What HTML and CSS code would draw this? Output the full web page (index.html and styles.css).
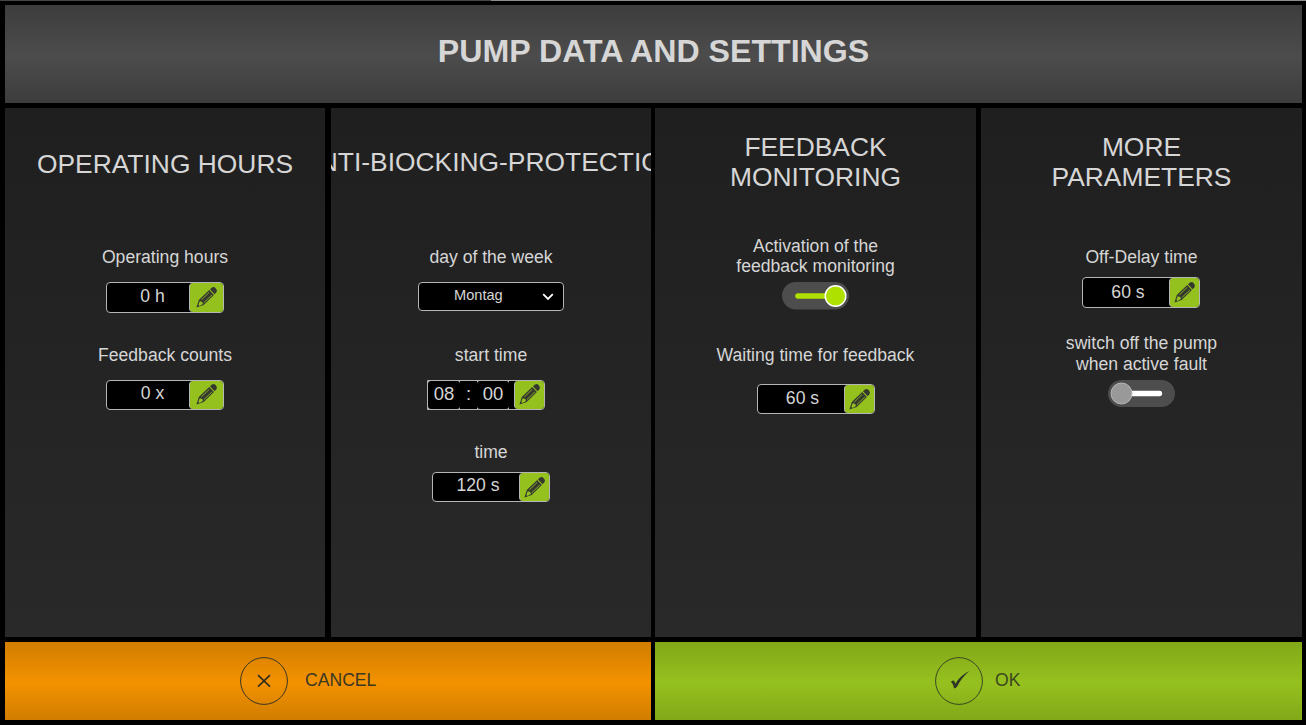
FILE: index.html
```html
<!DOCTYPE html>
<html lang="en">
<head>
<meta charset="utf-8">
<title>Pump data and settings</title>
<link rel="stylesheet" href="styles.css">
</head>
<body>
<svg class="defs" width="0" height="0">
  <symbol id="pencil" viewBox="0 0 24 24">
    <path d="M1.5 22.5 4 14.6 14.8 4.3 19.7 9.5 9 19.8Z" fill="#34382f"/>
    <path d="M15.6 3.4 17.7 1.6Q19.5.4 21.2 1.9L22.2 3Q23.6 4.8 22.3 6.6L20.5 8.6Z" fill="#34382f"/>
    <path d="M4.9 15.8 3.5 19.8 4.8 20.8 8.2 18.9 7.7 16.7Z" fill="#95c11f"/>
    <path d="M6.6 14.6 14.8 6.6M9.2 17.4 17.8 9.2" fill="none" stroke="#95c11f" stroke-width=".9"/>
  </symbol>
</svg>
<div class="screen">
  <header class="header"><h1 class="title">PUMP DATA AND SETTINGS</h1></header>
  <main class="panels">
    <section class="panel">
      <h2 class="heading heading-low">OPERATING HOURS</h2>
      <div class="label">Operating hours</div>
      <div class="input input-tall input-hours"><span class="value value-hours">0 h</span><button class="edit edit-wide"><svg class="pencil"><use href="#pencil"/></svg></button></div>
      <div class="label label-second">Feedback counts</div>
      <div class="input input-counts"><span class="value value-counts">0 x</span><button class="edit edit-wide"><svg class="pencil"><use href="#pencil"/></svg></button></div>
    </section>
    <section class="panel panel-protection">
      <h2 class="heading heading-clip">ANTI-BIOCKING-PROTECTION</h2>
      <div class="label">day of the week</div>
      <div class="select"><span class="choice">Montag</span><svg class="chevron" viewBox="0 0 12 8"><path d="M1.2 1.2 6 6 10.8 1.2" fill="none" stroke="#fff" stroke-width="1.8"/></svg></div>
      <div class="label label-start">start time</div>
      <div class="input input-clock">
        <div class="clock"><span class="digits">08</span><span class="colon">:</span><span class="digits">00</span><span class="rest"></span></div>
        <button class="edit"><svg class="pencil"><use href="#pencil"/></svg></button>
      </div>
      <div class="label label-time">time</div>
      <div class="input input-time"><span class="value">120 s</span><button class="edit"><svg class="pencil"><use href="#pencil"/></svg></button></div>
    </section>
    <section class="panel">
      <h2 class="heading">FEEDBACK<br>MONITORING</h2>
      <div class="label label-activation">Activation of the<br>feedback monitoring</div>
      <svg class="toggle" viewBox="0 0 67 28"><rect width="67" height="27.5" rx="13.75" fill="#4d4d4d"/><path d="M16 14H46" stroke="#aee000" stroke-width="5.6" stroke-linecap="round"/><circle cx="53.5" cy="14" r="10.3" fill="#aee000" stroke="#fff" stroke-width="1.5"/></svg>
      <div class="label label-waiting">Waiting time for feedback</div>
      <div class="input input-waiting"><span class="value value-waiting">60 s</span><button class="edit"><svg class="pencil"><use href="#pencil"/></svg></button></div>
    </section>
    <section class="panel">
      <h2 class="heading">MORE<br>PARAMETERS</h2>
      <div class="label">Off-Delay time</div>
      <div class="input input-tall input-delay"><span class="value value-delay">60 s</span><button class="edit"><svg class="pencil"><use href="#pencil"/></svg></button></div>
      <div class="label label-fault">switch off the pump<br>when active fault</div>
      <svg class="toggle toggle-off" viewBox="0 0 67 28"><rect width="67" height="27" rx="13.5" fill="#4d4d4d"/><path d="M20 13.5H51.5" stroke="#fff" stroke-width="5.3" stroke-linecap="round"/><circle cx="13.5" cy="13.5" r="10.5" fill="#999" stroke="#b8b8b8" stroke-width="1"/></svg>
    </section>
  </main>
  <footer class="actions">
    <button class="action cancel"><svg class="badge" viewBox="0 0 48 48"><circle cx="24" cy="24" r="23.4" fill="none" stroke="#3a3523" stroke-width="1"/><path d="M18 18.2 30 29.7M30 18.2 18 29.7" stroke="#302d20" stroke-width="1.6"/></svg><span class="caption">CANCEL</span></button>
    <button class="action ok"><svg class="badge" viewBox="0 0 48 48"><circle cx="24" cy="24" r="23.4" fill="none" stroke="#3a4523" stroke-width="1"/><path d="M15.8 25Q17.5 22.6 18.9 23.8 19.8 25 20.4 26.8 25.5 18 34.5 14 26.5 20.5 21.8 30 20.2 31.8 19 31.2Q18 26 15.8 25Z" fill="#303624"/></svg><span class="caption">OK</span></button>
  </footer>
</div>
</body>
</html>
```

FILE: styles.css
```css
* { box-sizing: border-box; }
body { margin: 0; background: #000; color: #d6d6d6; font-family: "Liberation Sans", Arial, sans-serif; }
button { padding: 0; border: 0; font: inherit; }
.defs { display: block; }
.screen {
  width: 1306px; height: 725px; padding: 4px 4px 5px 5px;
  border-top: 1px solid #454746;
  border-image: linear-gradient(90deg, #454746 0 37.6%, #8b8f8c 37.6%) 1;
  display: grid; grid-template-rows: 98px 529px 78px; gap: 5px; overflow: hidden;
}
.header { display: flex; align-items: center; justify-content: center; background: linear-gradient(#3d3d3d, #4c4c4c 52%, #3d3d3d); }
.title { margin: 0; padding-bottom: 6px; font-size: 32.15px; line-height: 38px; font-weight: 700; }
.panels { display: grid; grid-template-columns: 320px 320px 321px 321px; gap: 5px; }
.panel { display: flex; flex-direction: column; align-items: center; overflow: hidden; background: linear-gradient(#1f1f1f, #292929); }
.panel-protection { margin: 0 -1px 0 1px; }
.heading { flex: none; height: 139px; margin: 0; padding-top: 24px; font-size: 26.4px; line-height: 30.4px; font-weight: 400; text-align: center; white-space: nowrap; }
.heading-low { padding-top: 41px; }
.heading-clip { padding-top: 39px; }
.label { flex: none; font-size: 17.6px; line-height: 20.4px; text-align: center; }
.label-second { margin-top: 32px; }
.label-start { margin-top: 34px; }
.label-time { margin-top: 32px; }
.label-activation { margin-top: -11px; }
.label-waiting { margin-top: 35px; }
.label-fault { margin-top: 25px; }
.input { flex: none; display: flex; width: 118px; height: 30px; border: 1px solid #b5b5b5; border-radius: 4px; background: #000; margin-top: 14px; overflow: hidden; }
.input-tall { height: 31px; }
.input-hours { margin-top: 15px; }
.input-hours, .input-counts { margin-right: 1px; }
.input-clock { margin-right: 10px; border-radius: 0 4px 4px 0; }
.input-time { margin-top: 10px; }
.input-waiting { margin-top: 19px; }
.input-delay { margin-top: 10px; margin-right: 1px; }
.value { flex: 1; padding-left: 4px; font-size: 17.6px; line-height: 25px; text-align: center; }
.value-hours { padding-left: 10px; line-height: 27px; }
.value-counts { padding-left: 10px; }
.value-waiting { line-height: 26px; }
.value-delay { line-height: 28px; }
.edit { flex: none; width: 30px; display: flex; align-items: center; justify-content: center; background: #95c11f; border-left: 1px solid #b5b5b5; border-radius: 4px 0 0 4px; }
.edit-wide { width: 34px; }
.pencil { width: 23px; height: 23px; }
.clock { flex: 1; display: flex; font-size: 18.5px; line-height: 26px; text-align: center; background: #c4c4c4; }
.digits { width: 32px; border-radius: 3px; background: #000; }
.colon { width: 17px; background: #000; }
.rest { flex: 1; background: #000; }
.select { flex: none; width: 146px; height: 29px; margin-top: 15px; padding: 0 9px 0 35px; display: flex; align-items: center; justify-content: space-between; border: 1px solid #b5b5b5; border-radius: 4px; background: #000; }
.choice { font-size: 14.6px; line-height: 17px; padding-bottom: 2px; }
.chevron { width: 12px; height: 8px; }
.toggle { flex: none; width: 67px; height: 28px; margin-top: 5px; }
.toggle-off { margin-top: 6px; margin-right: 1px; }
.actions { display: grid; grid-template-columns: 646px 647px; gap: 4px; }
.action { display: flex; align-items: center; color: #3b3823; }
.cancel { padding-left: 235px; gap: 17px; background: linear-gradient(#d17d00, #f39200 52%, #d17d00); }
.ok { padding-left: 280px; gap: 12px; color: #3b4720; background: linear-gradient(#82a818, #95c11f 52%, #82a818); }
.badge { width: 48px; height: 48px; }
.caption { font-size: 17.6px; line-height: 20px; padding-bottom: 3px; }
```
